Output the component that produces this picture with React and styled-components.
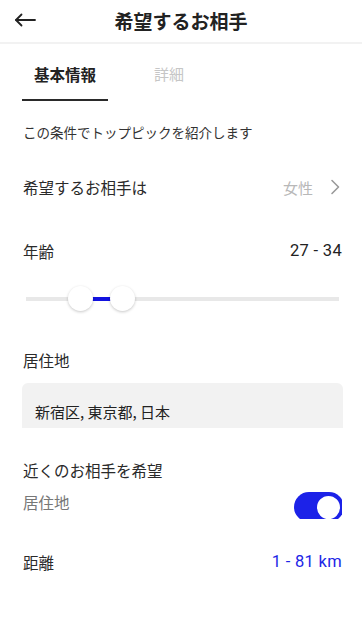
import { useState } from 'react';
import styled, { createGlobalStyle } from 'styled-components';

const GlobalStyle = createGlobalStyle`
  body {
    margin: 0;
    background: #fff;
    font-family: "Noto Sans CJK JP", "Noto Sans", sans-serif;
    color: #222;
  }
`;

const Page = styled.div`
  width: 362px;
  height: 627px;
  overflow: hidden;
  background: #fff;
`;

const Header = styled.header`
  position: relative;
  height: 42px;
  display: flex;
  align-items: center;
  justify-content: center;
  border-bottom: 2px solid #f2f2f2;
`;

const BackButton = styled.button`
  position: absolute;
  left: 12px;
  top: 9px;
  width: 26px;
  height: 22px;
  padding: 0;
  border: 0;
  background: none;
  display: flex;
  align-items: center;
  justify-content: center;
`;

const Title = styled.h1`
  margin: 0;
  font-size: 19px;
  font-weight: 700;
  line-height: 24px;
  color: #222;
`;

const Tabs = styled.div`
  display: flex;
  gap: 34px;
  padding: 0 22px;
`;

const Tab = styled.div`
  padding: 19px 12px 14px;
  font-size: ${p => (p.active ? '15.5px' : '15px')};
  font-weight: ${p => (p.active ? 700 : 400)};
  line-height: 22px;
  color: ${p => (p.active ? '#222' : '#c6c6c6')};
  border-bottom: 2px solid ${p => (p.active ? '#2a2a2a' : 'transparent')};
`;

const Content = styled.div`
  padding: 0 20px 0 23px;
`;

const Note = styled.p`
  margin: 22px 0 0;
  font-size: 13.5px;
  line-height: 18px;
  color: #333;
`;

const Row = styled.div`
  display: flex;
  align-items: center;
  justify-content: space-between;
  margin-top: ${p => p.top}px;
  height: 22px;
`;

const Label = styled.span`
  font-size: 15.5px;
  line-height: 22px;
  color: ${p => (p.muted ? '#777' : '#2a2a2a')};
`;

const Value = styled.span`
  font-family: Roboto, "Noto Sans", sans-serif;
  font-size: 16.5px;
  line-height: 22px;
  letter-spacing: 0.3px;
  color: ${p => (p.blue ? '#1c25e6' : '#222')};
`;

const Picker = styled.div`
  display: flex;
  align-items: center;
  gap: 17px;
  padding-right: 2px;
  font-size: 15px;
  color: #b8b8b8;
`;

const Slider = styled.div`
  position: relative;
  margin: 24px 3px 0 3px;
  height: 26px;
`;

const Track = styled.div`
  position: absolute;
  left: 0;
  right: 0;
  top: 11px;
  height: 4px;
  background: #e8e8e8;
`;

const Fill = styled.div`
  position: absolute;
  top: 11px;
  height: 4px;
  background: #1212e0;
`;

const Thumb = styled.div`
  position: absolute;
  top: 0;
  width: 25px;
  height: 25px;
  margin-left: -12.5px;
  border-radius: 50%;
  background: #fff;
  box-shadow: 0 1px 3px rgba(0, 0, 0, 0.22);
`;

const Field = styled.div`
  margin: 12px -1px 0 -1px;
  height: 45px;
  overflow: hidden;
  border-radius: 6px 6px 0 0;
  background: #f2f2f2;
  padding: 18px 13px 0;
  box-sizing: border-box;
  font-size: 15px;
  line-height: 22px;
  color: #222;
`;

const ToggleRow = styled.div`
  display: flex;
  justify-content: space-between;
  align-items: flex-start;
  height: 28px;
  overflow: hidden;
  margin-top: 10px;
`;

const Toggle = styled.button`
  position: relative;
  width: 50px;
  height: 30px;
  margin-top: 1px;
  margin-right: -2px;
  padding: 0;
  border: 0;
  border-radius: 15px;
  background: ${p => (p.on ? '#1c22e8' : '#ddd')};
`;

const Knob = styled.span`
  position: absolute;
  top: 2px;
  left: ${p => (p.on ? '21px' : '2px')};
  width: 23px;
  height: 23px;
  border-radius: 50%;
  background: #fff;
  border: 2px solid ${p => (p.on ? '#1c22e8' : '#ddd')};
`;

const trackWidth = 313;
const minAge = 18;
const maxAge = 70;

export default function App() {
  const [tab, setTab] = useState(0);
  const [nearby, setNearby] = useState(true);
  const age = [27, 34];
  const pos = a => ((a - minAge) / (maxAge - minAge)) * trackWidth;
  const from = pos(age[0]);
  const to = pos(age[1]);

  return (
    <Page>
      <GlobalStyle />
      <Header>
        <BackButton aria-label="戻る">
          <svg width="22" height="14" viewBox="0 0 22 14" fill="none" stroke="#222" strokeWidth="1.8" strokeLinecap="round" strokeLinejoin="round">
            <path d="M21 7H2" />
            <path d="M7.5 1.5L2 7l5.5 5.5" />
          </svg>
        </BackButton>
        <Title>希望するお相手</Title>
      </Header>

      <Tabs>
        {['基本情報', '詳細'].map((t, i) => (
          <Tab key={t} active={tab === i} onClick={() => setTab(i)}>
            {t}
          </Tab>
        ))}
      </Tabs>

      <Content>
        <Note>この条件でトップピックを紹介します</Note>

        <Row top={35}>
          <Label>希望するお相手は</Label>
          <Picker>
            女性
            <svg width="10" height="16" viewBox="0 0 10 16" fill="none" stroke="#9a9a9a" strokeWidth="1.6" strokeLinecap="round" strokeLinejoin="round">
              <path d="M2 1.5L8.5 8 2 14.5" />
            </svg>
          </Picker>
        </Row>

        <Row top={42}>
          <Label>年齢</Label>
          <Value>{age[0]} - {age[1]}</Value>
        </Row>

        <Slider>
          <Track />
          <Fill style={{ left: from, width: to - from }} />
          <Thumb style={{ left: from }} />
          <Thumb style={{ left: to }} />
        </Slider>

        <Row top={37}>
          <Label>居住地</Label>
        </Row>
        <Field>新宿区, 東京都, 日本</Field>

        <Row top={31}>
          <Label>近くのお相手を希望</Label>
        </Row>
        <ToggleRow>
          <Label muted>居住地</Label>
          <Toggle on={nearby} onClick={() => setNearby(!nearby)} aria-label="近くのお相手を希望">
            <Knob on={nearby} />
          </Toggle>
        </ToggleRow>

        <Row top={32}>
          <Label>距離</Label>
          <Value blue>1 - 81 km</Value>
        </Row>
      </Content>
    </Page>
  );
}
